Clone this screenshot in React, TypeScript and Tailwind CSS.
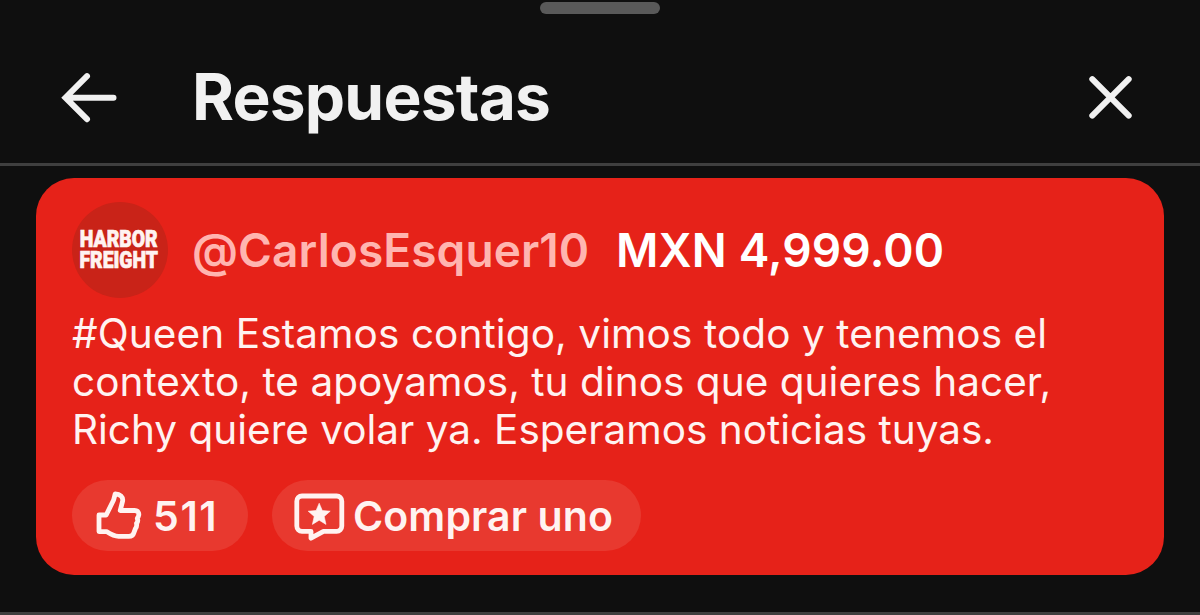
import type { ReactNode } from "react";

function BackIcon() {
    return (
        <svg className="w-[60px] h-[52px]" viewBox="0 0 60 52" fill="none" stroke="#f1f1f1" strokeWidth="6" strokeLinecap="round">
            <path d="M27 4.2 5.5 25.7 27 47.2M6 25.7h47.5" />
        </svg>
    );
}

function CloseIcon() {
    return (
        <svg className="w-[48px] h-[48px]" viewBox="0 0 48 48" fill="none" stroke="#f1f1f1" strokeWidth="6" strokeLinecap="round">
            <path d="M6.3 5.2 42.7 41.6M42.7 5.2 6.3 41.6" />
        </svg>
    );
}

function LikeIcon() {
    return (
        <svg className="w-[48px] h-[52px]" viewBox="0 0 48 52" fill="none" stroke="#fff3f1" strokeWidth="4.8" strokeLinejoin="round">
            <path d="M5 25H12.2L19.6 10L21.2 3.8C26 4 29.4 7 28.6 11.2L26.2 20.5H40.5C44 20.5 45.6 23.3 44.4 26.2L43.3 28.6C44.1 30.2 43.7 32 42.5 33.4C43 35.4 42.6 37 41.4 38.6L39.8 43C39 45.6 37.2 46.4 35 46.4H24.5C20 46.4 16.5 44.2 12.5 41.6H5Z" />
        </svg>
    );
}

function SuperIcon() {
    return (
        <svg className="w-[52px] h-[52px]" viewBox="0 0 52 52" fill="none">
            <path
                d="M9 6H43.6C46.6 6 48.8 8.2 48.8 11.2V36.1C48.8 39.1 46.6 41.3 43.6 41.3H30.5L18 48.2V41.3H9C6 41.3 3.8 39.1 3.8 36.1V11.2C3.8 8.2 6 6 9 6Z"
                stroke="#fff3f1"
                strokeWidth="4.8"
                strokeLinejoin="round"
            />
            <path d="M26.2 13.2 29.3 20.5 37.2 21.2 31.2 26.4 33 34.4 26.2 30.2 19.4 34.4 21.2 26.4 15.2 21.2 23.1 20.5Z" fill="#fff3f1" stroke="#fff3f1" strokeWidth="0.6" />
        </svg>
    );
}

function Pill({ className, children }: { className: string; children: ReactNode }) {
    return (
        <button className={`flex h-[71px] items-center rounded-full bg-[#e8392f] text-[41px] leading-none font-semibold whitespace-nowrap text-[#fff3f1] ${className}`}>
            {children}
        </button>
    );
}

const message = [
    { text: "#Queen Estamos contigo, vimos todo y tenemos el", className: "tracking-[0.09px]" },
    { text: "contexto, te apoyamos, tu dinos que quieres hacer,", className: "tracking-[0.04px]" },
    { text: "Richy quiere volar ya. Esperamos noticias tuyas.", className: "tracking-normal" },
];

export default function App() {
    return (
        <div className="flex h-[615px] w-[1200px] flex-col overflow-hidden bg-[#0f0f0f] font-['Inter',sans-serif]">
            <div className="mx-auto mt-[2px] h-3 w-[120px] shrink-0 rounded-full bg-[#595959]" />

            <header className="flex h-[152px] shrink-0 items-center border-b-3 border-[#3f3f3f] pt-[19px] pr-[66px] pl-[60px]">
                <BackIcon />
                <h1 className="-mt-[2px] ml-[72px] text-[64px] leading-none font-bold tracking-[-0.8px] whitespace-nowrap text-[#f1f1f1]">Respuestas</h1>
                <div className="ml-auto">
                    <CloseIcon />
                </div>
            </header>

            <article className="mx-9 mt-3 h-[397px] shrink-0 rounded-[38px] bg-[#e62219] px-9 pt-6">
                <div className="flex h-24 items-center whitespace-nowrap">
                    <div className="flex size-24 shrink-0 items-center justify-center rounded-full bg-[#c92318]">
                        <p className="-ml-[2px] scale-x-[0.84] text-center font-['Roboto',sans-serif] text-[23px] leading-[21px] font-black text-[#fff3f1] [-webkit-text-stroke:0.7px_#fff3f1]">
                            HARBOR
                            <br />
                            FREIGHT
                        </p>
                    </div>
                    <span className="ml-6 w-[398px] text-[46px] leading-none font-[560] tracking-[0.1px] text-[#ffb5b0]">@CarlosEsquer10</span>
                    <span className="ml-[26px] text-[46px] leading-none font-semibold tracking-[0.15px] text-white">MXN 4,999.00</span>
                </div>

                <div className="mt-3 text-[40.5px] leading-[48px] text-[#fff3f1]">
                    {message.map((line) => (
                        <p key={line.text} className={`whitespace-nowrap ${line.className}`}>
                            {line.text}
                        </p>
                    ))}
                </div>

                <div className="mt-[26px] flex gap-6">
                    <Pill className="w-[176px] pl-[22px]">
                        <LikeIcon />
                        <span className="mt-[2px] ml-[11px] tracking-[1.6px]">511</span>
                    </Pill>
                    <Pill className="w-[369px] pl-[21px]">
                        <SuperIcon />
                        <span className="mt-[2px] ml-2 tracking-[0.1px]">Comprar uno</span>
                    </Pill>
                </div>
            </article>

            <div className="mt-[37px] h-[3px] shrink-0 bg-[#3f3f3f]" />
        </div>
    );
}
